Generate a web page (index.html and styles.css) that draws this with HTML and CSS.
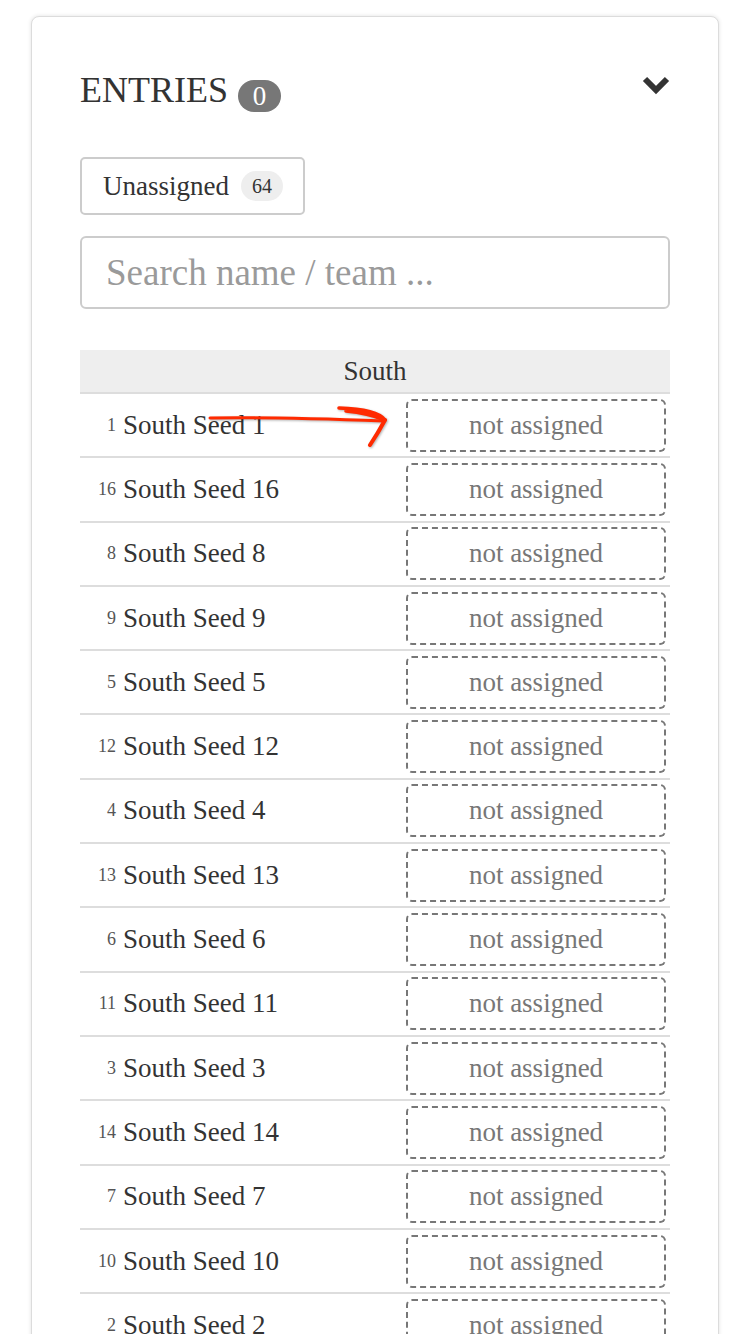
FILE: index.html
```html
<!DOCTYPE html>
<html lang="en">
<head>
<meta charset="utf-8">
<title>Entries</title>
<link rel="stylesheet" href="styles.css">
</head>
<body>
<div class="page">
  <section class="card">
    <div class="head">
      <h2 class="title"><span>ENTRIES</span><span class="title-badge">0</span></h2>
      <svg class="chevron" width="28" height="20" viewBox="0 0 28 20" aria-hidden="true">
        <polyline points="3,4 14,15 25,4" fill="none" stroke="#333" stroke-width="6" stroke-linejoin="miter" stroke-linecap="butt"/>
      </svg>
    </div>

    <button class="filter-btn" type="button">Unassigned <span class="count">64</span></button>

    <input class="search" type="text" placeholder="Search name / team ...">

    <div class="table">
      <div class="table-head">South</div>
      <div class="row row--annotated">
        <span class="seed">1</span><span class="name">South Seed 1</span><span class="slot">not assigned</span>
        <svg class="arrow" width="200" height="55" viewBox="0 0 200 55" aria-hidden="true">
          <g fill="none" stroke="#ff2a00" stroke-linecap="round" stroke-linejoin="round">
            <path d="M10,18 C70,17 130,19 184,21" stroke-width="3"/>
            <path d="M139,8 Q177,9 185,20 Q168,13 146,11" stroke-width="3.6"/>
            <path d="M185,20 Q178,33 170,45" stroke-width="4"/>
          </g>
        </svg>
      </div>
      <div class="row"><span class="seed">16</span><span class="name">South Seed 16</span><span class="slot">not assigned</span></div>
      <div class="row"><span class="seed">8</span><span class="name">South Seed 8</span><span class="slot">not assigned</span></div>
      <div class="row"><span class="seed">9</span><span class="name">South Seed 9</span><span class="slot">not assigned</span></div>
      <div class="row"><span class="seed">5</span><span class="name">South Seed 5</span><span class="slot">not assigned</span></div>
      <div class="row"><span class="seed">12</span><span class="name">South Seed 12</span><span class="slot">not assigned</span></div>
      <div class="row"><span class="seed">4</span><span class="name">South Seed 4</span><span class="slot">not assigned</span></div>
      <div class="row"><span class="seed">13</span><span class="name">South Seed 13</span><span class="slot">not assigned</span></div>
      <div class="row"><span class="seed">6</span><span class="name">South Seed 6</span><span class="slot">not assigned</span></div>
      <div class="row"><span class="seed">11</span><span class="name">South Seed 11</span><span class="slot">not assigned</span></div>
      <div class="row"><span class="seed">3</span><span class="name">South Seed 3</span><span class="slot">not assigned</span></div>
      <div class="row"><span class="seed">14</span><span class="name">South Seed 14</span><span class="slot">not assigned</span></div>
      <div class="row"><span class="seed">7</span><span class="name">South Seed 7</span><span class="slot">not assigned</span></div>
      <div class="row"><span class="seed">10</span><span class="name">South Seed 10</span><span class="slot">not assigned</span></div>
      <div class="row"><span class="seed">2</span><span class="name">South Seed 2</span><span class="slot">not assigned</span></div>
      <div class="row"><span class="seed">15</span><span class="name">South Seed 15</span><span class="slot">not assigned</span></div>
    </div>
  </section>
</div>
</body>
</html>
```

FILE: styles.css
```css
* { box-sizing: border-box; }

html, body {
  margin: 0;
  background: #fff;
}

body {
  font-family: "Liberation Serif", "Times New Roman", serif;
  color: #333;
}

.page {
  padding: 16px 31px 0 31px;
}

.card {
  border: 1px solid #dcdcdc;
  border-radius: 8px;
  box-shadow: 0 0 4px rgba(0, 0, 0, 0.12);
  padding: 55px 48px 40px 48px;
  background: #fff;
}

.head {
  display: flex;
  justify-content: space-between;
  align-items: flex-start;
}

.title {
  margin: 0;
  display: flex;
  align-items: flex-end;
  gap: 10px;
  font-size: 36px;
  line-height: 37px;
  font-weight: normal;
  color: #333;
}

.title-badge {
  display: inline-flex;
  align-items: center;
  justify-content: center;
  width: 43px;
  height: 32px;
  margin-bottom: -3px;
  border-radius: 16px;
  background: #777;
  color: #fff;
  font-size: 27px;
  line-height: 1;
}

.chevron {
  display: block;
  margin-top: 3px;
  margin-right: 0;
}

.filter-btn {
  display: inline-flex;
  align-items: center;
  gap: 12px;
  margin-top: 48px;
  height: 58px;
  padding: 0 20px 0 21px;
  border: 2px solid #ccc;
  border-radius: 5px;
  background: #fff;
  font-family: inherit;
  font-size: 27px;
  color: #333;
}

.count {
  display: inline-flex;
  align-items: center;
  justify-content: center;
  width: 42px;
  height: 30px;
  border-radius: 15px;
  background: #eee;
  font-size: 20px;
  color: #333;
}

.search {
  display: block;
  width: 100%;
  height: 73px;
  margin-top: 21px;
  padding: 0 24px;
  border: 2px solid #ccc;
  border-radius: 6px;
  font-family: inherit;
  font-size: 37px;
  color: #333;
  outline: none;
}

.search::placeholder {
  color: #9a9a9a;
}

.table {
  margin-top: 41px;
}

.table-head {
  height: 44px;
  background: #eee;
  border-bottom: 2px solid #ddd;
  text-align: center;
  font-size: 27px;
  line-height: 42px;
  color: #333;
}

.row {
  display: flex;
  align-items: center;
  height: 64.3px;
  border-bottom: 2px solid #ddd;
}

.row--annotated {
  position: relative;
}

.seed {
  width: 36px;
  text-align: right;
  font-size: 18px;
  color: #555;
}

.name {
  flex: 1;
  margin-left: 7px;
  font-size: 27px;
  color: #333;
}

.slot {
  width: 260px;
  height: 53px;
  margin-right: 4px;
  border: 2px dashed #777;
  border-radius: 6px;
  display: flex;
  align-items: center;
  justify-content: center;
  font-size: 27px;
  color: #777;
}

.arrow {
  position: absolute;
  left: 120px;
  top: 6px;
  filter: drop-shadow(1px 1px 1px rgba(0, 0, 0, 0.3));
}
```
